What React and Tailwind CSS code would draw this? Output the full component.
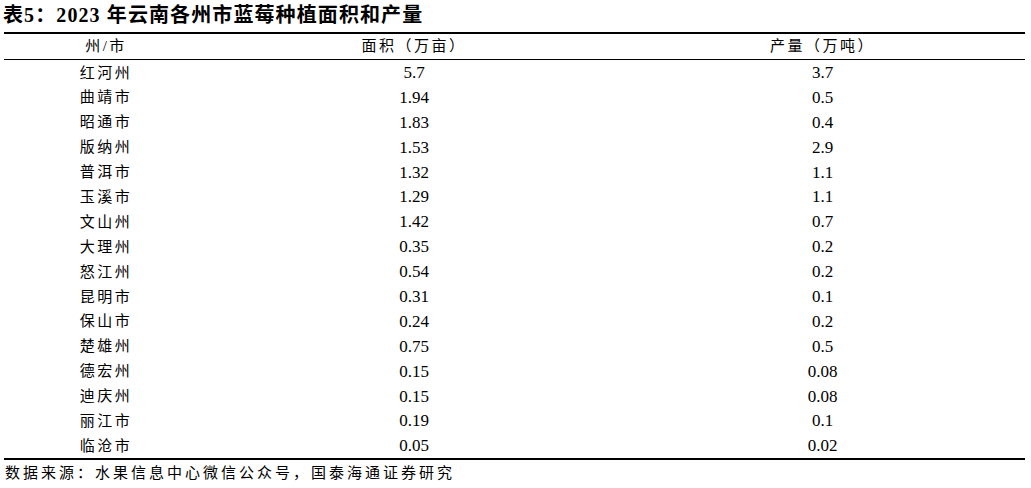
const rows = [
  ["红河州", "5.7", "3.7"],
  ["曲靖市", "1.94", "0.5"],
  ["昭通市", "1.83", "0.4"],
  ["版纳州", "1.53", "2.9"],
  ["普洱市", "1.32", "1.1"],
  ["玉溪市", "1.29", "1.1"],
  ["文山州", "1.42", "0.7"],
  ["大理州", "0.35", "0.2"],
  ["怒江州", "0.54", "0.2"],
  ["昆明市", "0.31", "0.1"],
  ["保山市", "0.24", "0.2"],
  ["楚雄州", "0.75", "0.5"],
  ["德宏州", "0.15", "0.08"],
  ["迪庆州", "0.15", "0.08"],
  ["丽江市", "0.19", "0.1"],
  ["临沧市", "0.05", "0.02"],
];

const App = () => {
  return (
    <div className="w-[1031px] h-[488px] bg-white text-black font-['Liberation_Serif','Noto_Sans_CJK_SC',serif] overflow-hidden">
      <div className="pl-[3px] pt-[1px] h-[32px] text-[20px] font-bold leading-[28px] tracking-[1.1px]">
        表5：2023 年云南各州市蓝莓种植面积和产量
      </div>

      <div className="ml-[4px] w-[1021px] border-t-2 border-b-2 border-black">
        <div className="grid grid-cols-[204px_412px_405px] h-[26px] items-center border-b border-black text-[15px] tracking-[2.5px]">
          <div className="text-center">州/市</div>
          <div className="text-center">面积（万亩）</div>
          <div className="text-center">产量（万吨）</div>
        </div>
        {rows.map((r) => (
          <div key={r[0]} className="grid grid-cols-[204px_412px_405px] h-[24.9px] items-center">
            <div className="text-center text-[15px] tracking-[2.5px]">{r[0]}</div>
            <div className="text-center text-[17px]">{r[1]}</div>
            <div className="text-center text-[17px]">{r[2]}</div>
          </div>
        ))}
      </div>

      <div className="pl-[5px] pt-[2px] text-[15px] leading-[22px] tracking-[3px]">
        数据来源：水果信息中心微信公众号，国泰海通证券研究
      </div>
    </div>
  );
};

export default App;
